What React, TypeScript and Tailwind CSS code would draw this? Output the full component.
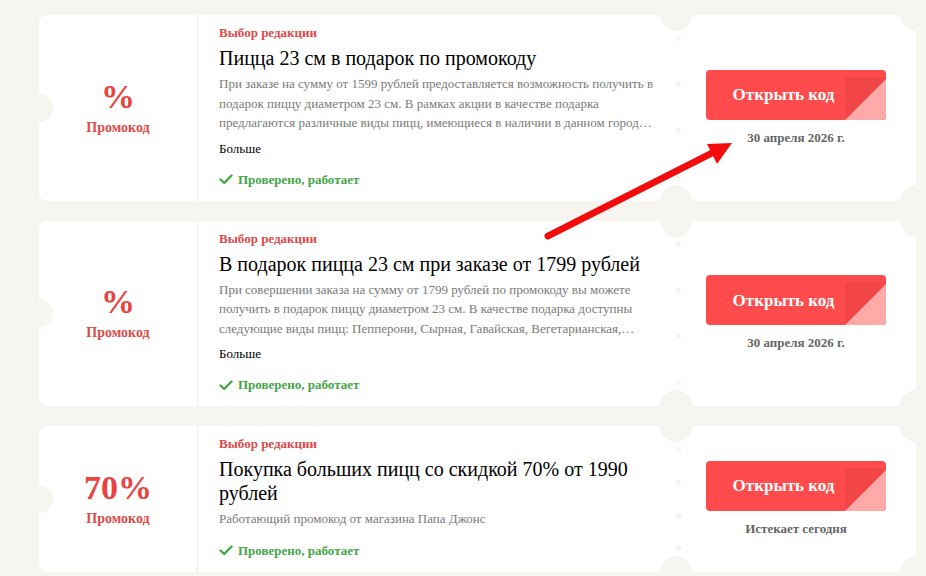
import React from "react";

type Promo = {
  value: string;
  title: string;
  text: string;
  more?: boolean;
  expires: string;
};

const promos: Promo[] = [
  {
    value: "%",
    title: "Пицца 23 см в подарок по промокоду",
    text: "При заказе на сумму от 1599 рублей предоставляется возможность получить в подарок пиццу диаметром 23 см. В рамках акции в качестве подарка предлагаются различные виды пицц, имеющиеся в наличии в данном городе на момент оформления заказа.",
    more: true,
    expires: "30 апреля 2026 г."
  },
  {
    value: "%",
    title: "В подарок пицца 23 см при заказе от 1799 рублей",
    text: "При совершении заказа на сумму от 1799 рублей по промокоду вы можете получить в подарок пиццу диаметром 23 см. В качестве подарка доступны следующие виды пицц: Пепперони, Сырная, Гавайская, Вегетарианская, Маргарита и другие.",
    more: true,
    expires: "30 апреля 2026 г."
  },
  {
    value: "70%",
    title: "Покупка больших пицц со скидкой 70% от 1990 рублей",
    text: "Работающий промокод от магазина Папа Джонс",
    expires: "Истекает сегодня"
  }
];

function CheckIcon() {
  return (
    <svg width="14" height="11" viewBox="0 0 14 11" className="shrink-0">
      <path d="M1.5 5.5 L5.2 9 L12.5 1.5" fill="none" stroke="#45a548" strokeWidth="2.4" strokeLinecap="round" strokeLinejoin="round" />
    </svg>
  );
}

function OpenButton() {
  return (
    <div className="relative flex h-[50px] w-[180px] items-center justify-center overflow-hidden rounded-[4px] bg-[#ff4b4b]">
      <div className="absolute bottom-0 right-0 h-[43px] w-[41px] bg-[#f24545]" />
      <svg width="41" height="41" viewBox="0 0 41 41" className="absolute bottom-0 right-0">
        <polygon points="0,41 41,41 41,0" fill="#ffa9a9" />
      </svg>
      <span className="relative pr-[25px] text-[17px] font-bold text-white">Открыть код</span>
    </div>
  );
}

function Card({ promo }: { promo: Promo }) {
  return (
    <div className="relative flex w-[877px] rounded-lg bg-white">
      {/* ticket notches */}
      <div className="absolute left-[-14px] top-1/2 h-7 w-7 -translate-y-1/2 rounded-full bg-[#f6f5f0]" />
      <div className="absolute left-[621px] top-[-16px] h-8 w-8 rounded-full bg-[#f6f5f0]" />
      <div className="absolute bottom-[-16px] left-[621px] h-8 w-8 rounded-full bg-[#f6f5f0]" />
      <div className="absolute right-[-16px] top-[-16px] h-8 w-8 rounded-full bg-[#f6f5f0]" />
      <div className="absolute bottom-[-16px] right-[-16px] h-8 w-8 rounded-full bg-[#f6f5f0]" />

      <div className="flex w-[159px] shrink-0 flex-col items-center justify-center border-r border-[#efefef] text-[#e8433f]">
        <div className="text-[34px] font-bold leading-[36px]">{promo.value}</div>
        <div className="mt-[4px] text-[14px] font-bold leading-[18px] text-[#e04a48]">Промокод</div>
      </div>

      <div className="flex w-[478px] shrink-0 flex-col px-[21px] pb-[12px] pt-[9px]">
        <div className="text-[13px] font-bold leading-[18px] text-[#e04a4a]">Выбор редакции</div>
        <div className="mt-[4px] text-[20px] leading-[24px] text-black">{promo.title}</div>
        <p className="mt-[4px] line-clamp-3 text-[13px] leading-[19.5px] text-[#7a7a7a]">{promo.text}</p>
        {promo.more && <div className="mt-[7px] text-[13px] leading-[18px] text-black">Больше</div>}
        <div className="mt-[13px] flex items-center gap-[5px] text-[13px] font-bold leading-[18px] text-[#45a548]">
          <CheckIcon />
          <span>Проверено, работает</span>
        </div>
      </div>

      <div className="flex w-[5px] shrink-0 flex-col items-center justify-between py-[21px]">
        {[0, 1, 2, 3].map((i) => (
          <div key={i} className="h-[5px] w-[5px] rounded-full bg-[#f4f3ef]" />
        ))}
      </div>

      <div className="flex flex-1 flex-col items-center justify-center gap-[10px] pr-[5px]">
        <OpenButton />
        <div className="text-[13px] font-bold leading-[16px] text-[#666]">{promo.expires}</div>
      </div>
    </div>
  );
}

export default function App() {
  return (
    <div className="relative h-[576px] w-[926px] overflow-hidden bg-[#f6f5f0] font-[family-name:'Liberation_Serif',serif]">
      <div className="flex flex-col gap-5 pl-[39px] pt-[15px]">
        {promos.map((p, i) => (
          <Card key={i} promo={p} />
        ))}
      </div>

      {/* red pointer arrow */}
      <svg width="926" height="576" className="pointer-events-none absolute left-0 top-0">
        <line x1="548" y1="236" x2="714" y2="152" stroke="#f20c0c" strokeWidth="7" strokeLinecap="round" />
        <polygon points="732,143 707,144 717,164" fill="#f20c0c" />
      </svg>
    </div>
  );
}
